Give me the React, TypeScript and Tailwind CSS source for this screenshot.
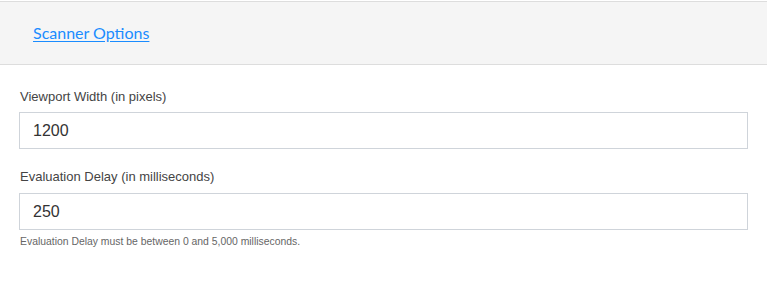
export default function App() {
  return (
    <div className="w-[767px] h-[285px] bg-white overflow-hidden" style={{ fontFamily: '"Liberation Sans", Arial, sans-serif' }}>
      <div className="mt-px h-[64px] border-y border-[#dddddd] bg-[#f5f5f5] flex items-center pl-[33px]">
        <a href="#" className="text-[16px] text-[#1a8cff] underline underline-offset-[2px] font-['Lato',sans-serif] leading-none">
          Scanner Options
        </a>
      </div>
      <div className="px-[19px] pt-[24px]">
        <label className="block pl-px text-[13px] leading-[16px] text-[#444444]">Viewport Width (in pixels)</label>
        <div className="mt-[7px] h-[37px] border border-[#cfd4da] flex items-center pl-[13px] text-[16px] text-[#333333]">
          1200
        </div>
        <label className="block pl-px mt-[20px] text-[13px] leading-[16px] text-[#444444]">Evaluation Delay (in milliseconds)</label>
        <div className="mt-[8px] h-[37px] border border-[#cfd4da] flex items-center pl-[13px] text-[16px] text-[#333333]">
          250
        </div>
        <p className="mt-[6px] pl-px text-[10.4px] leading-[12px] text-[#666666]">
          Evaluation Delay must be between 0 and 5,000 milliseconds.
        </p>
      </div>
    </div>
  );
}
